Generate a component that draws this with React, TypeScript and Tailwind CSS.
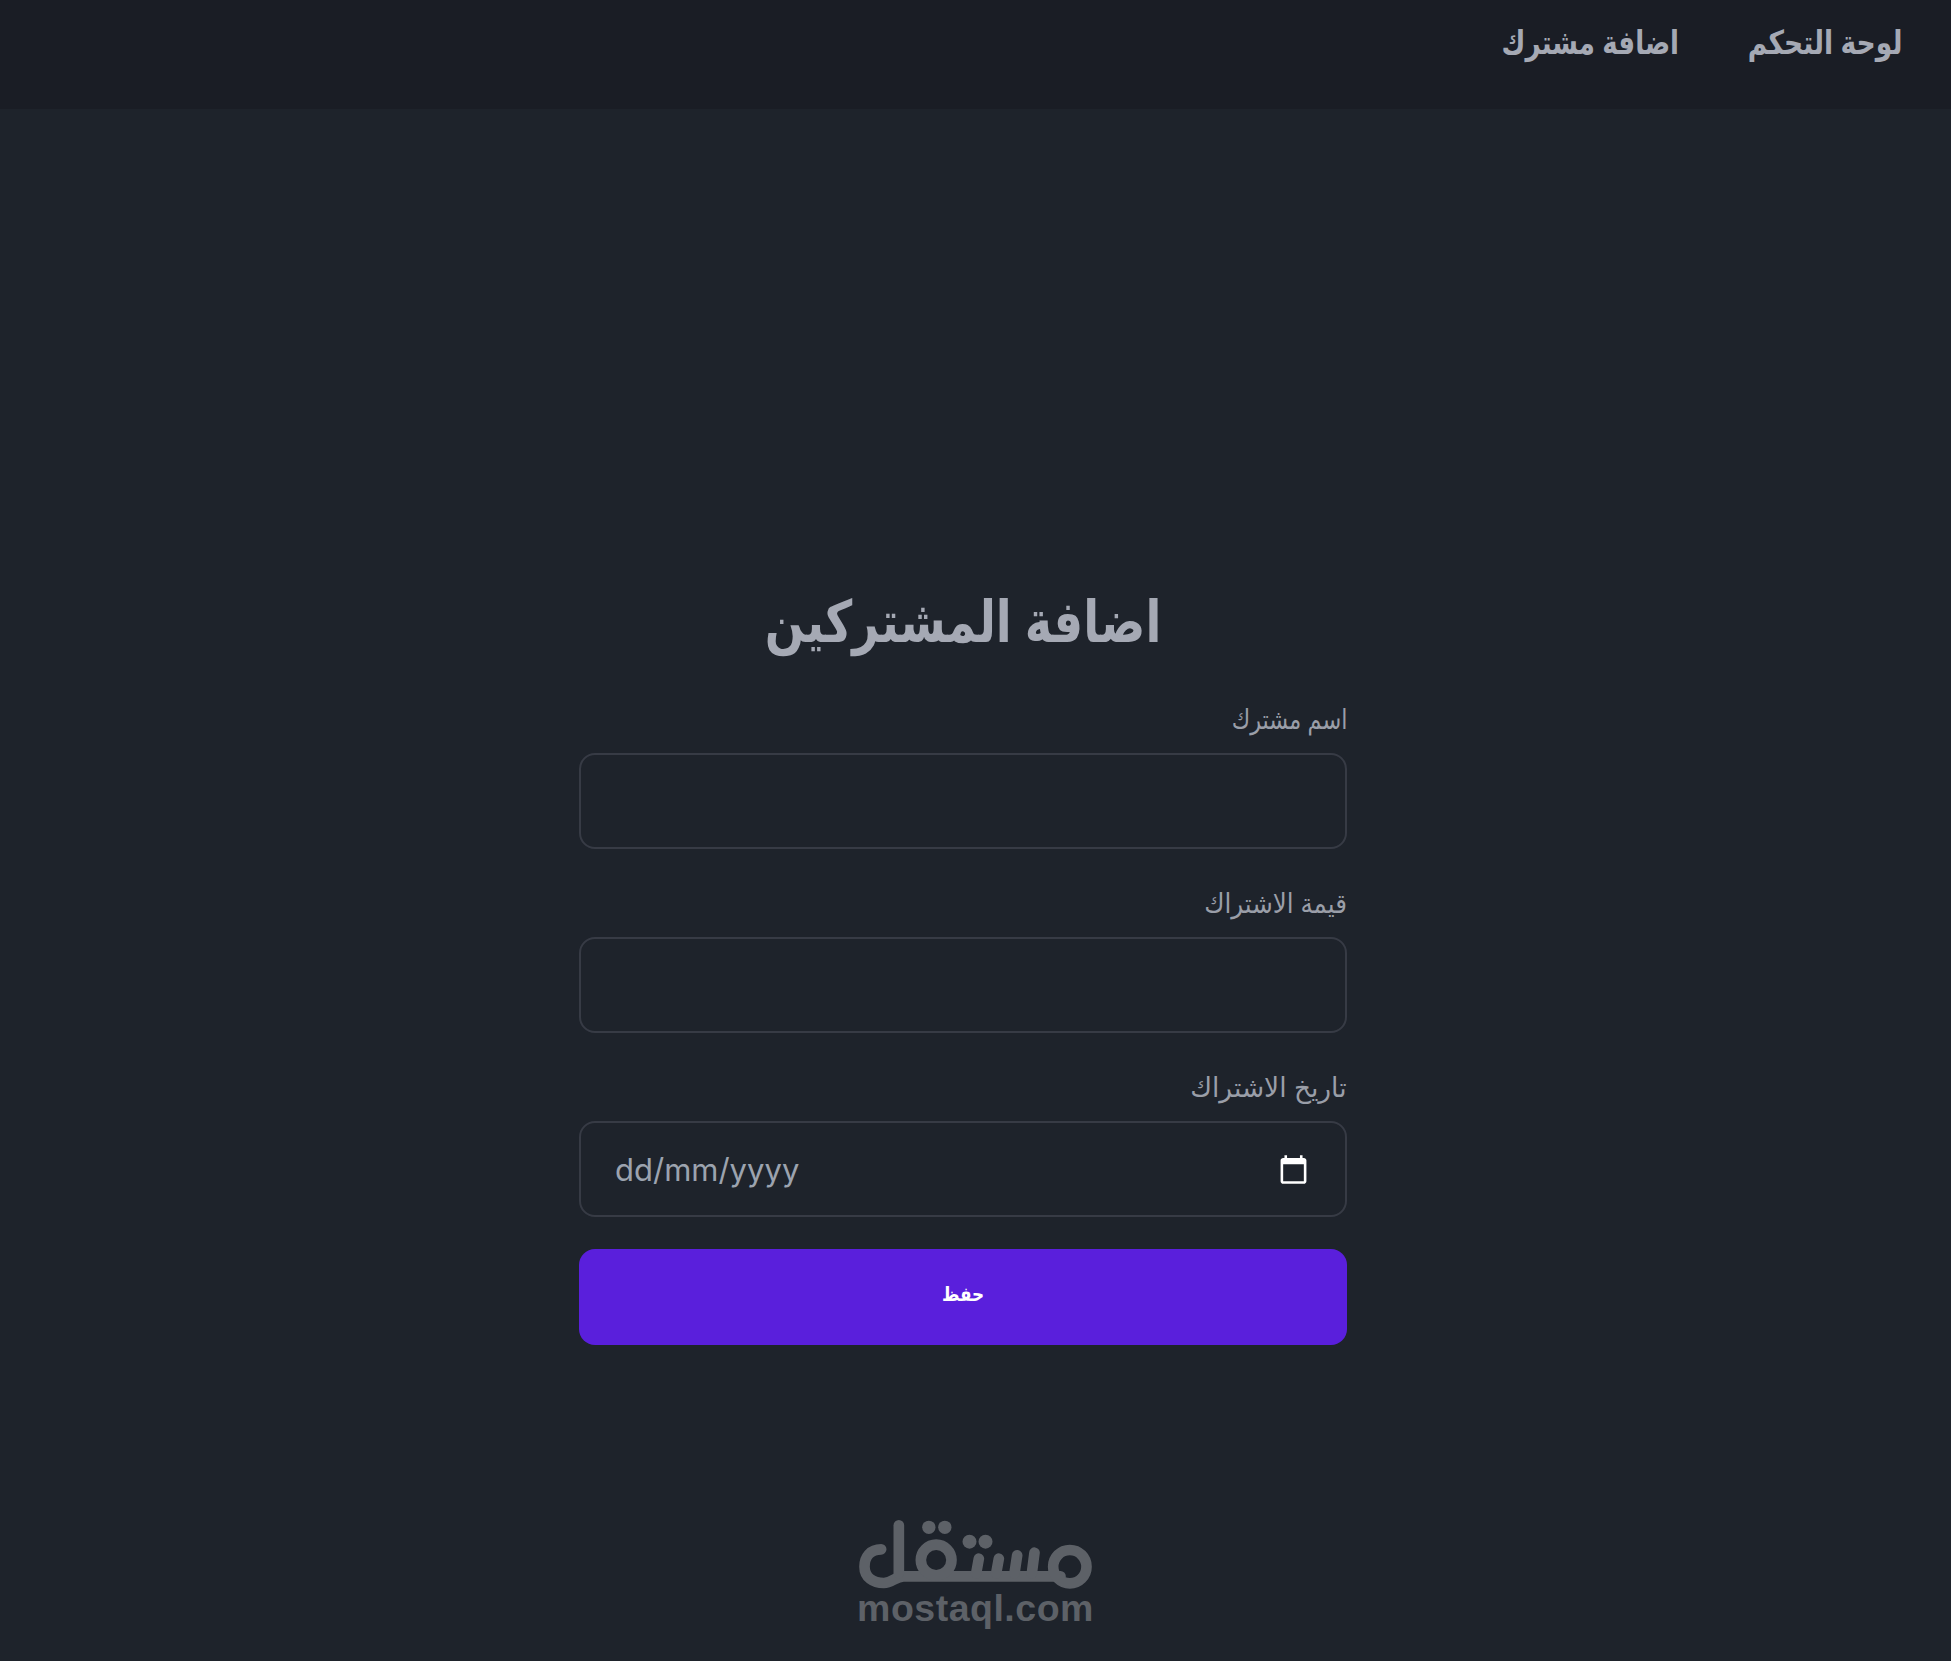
const arabic = { fontFamily: '"Liberation Sans", "DejaVu Sans", sans-serif' };

function Label({ text, scale }: { text: string; scale: string }) {
  return (
    <label className="mb-[14px] block text-[27px] leading-[38px] text-[#9a9ea8]">
      <span className={`inline-block origin-right ${scale}`}>{text}</span>
    </label>
  );
}

function Field({ label, scale }: { label: string; scale: string }) {
  return (
    <div className="flex flex-col">
      <Label text={label} scale={scale} />
      <input className="h-[96px] w-full rounded-[16px] border-2 border-[#373b45] bg-transparent px-[35px] text-[32px] text-white outline-none" />
    </div>
  );
}

function Logo() {
  return (
    <svg viewBox="0 0 900 300" className="h-[100px] w-[300px] -translate-x-[5.5px]" fill="none" stroke="#5d6167" strokeWidth="32" strokeLinecap="round" strokeLinejoin="round">
      <path d="M182 178 C150 178 132 200 132 230 C132 262 158 279 190 279 C215 279 225 259 250 259 H720" />
      <path d="M235 106 V250" />
      <circle cx="347" cy="210" r="46" />
      <path d="M467 250 L475 206 M527 250 L535 206 M582 250 L590 196 M634 250 L642 188" />
      <circle cx="748" cy="230" r="50" />
      <g fill="#5d6167" stroke="none">
        <circle cx="325" cy="112" r="20" />
        <circle cx="373" cy="112" r="20" />
        <circle cx="447" cy="155" r="21" />
        <circle cx="495" cy="155" r="21" />
      </g>
    </svg>
  );
}

export default function App() {
  return (
    <div dir="rtl" style={arabic} className="flex min-h-[1661px] flex-col bg-[#1e232b]">
      <header className="flex h-[109px] shrink-0 items-start gap-[26px] bg-[#1a1d25] pr-[30px] pt-[20px] text-[33px] font-bold leading-[46px] text-[#a5a9b4]">
        <a className="scale-x-[0.806]">لوحة التحكم</a>
        <a className="scale-x-[0.79]">اضافة مشترك</a>
      </header>
      <main className="flex flex-col items-center">
        <div className="flex w-full flex-col items-center pr-[25px]">
          <div className="mt-[477px] flex w-[768px] flex-col">
            <h1 className="mb-[43px] scale-x-[0.80] text-center text-[58px] font-bold leading-[72px] text-[#a5a9b4]">اضافة المشتركين</h1>
            <div className="flex flex-col gap-[36px]">
              <Field label="اسم مشترك" scale="scale-x-[0.83]" />
              <Field label="قيمة الاشتراك" scale="scale-x-[0.91]" />
              <div className="flex flex-col">
                <Label text="تاريخ الاشتراك" scale="scale-x-[0.98]" />
                <div dir="ltr" className="flex h-[96px] items-center justify-between rounded-[16px] border-2 border-[#373b45] pl-[34px] pr-[36px]">
                  <span style={{ fontFamily: 'Inter, sans-serif' }} className="pt-[2px] text-[31px] text-[#9ca3af]">dd/mm/yyyy</span>
                  <svg width="31" height="31" viewBox="0 0 24 24" fill="#ffffff"><path d="M20 3h-1V1h-2v2H7V1H5v2H4c-1.1 0-2 .9-2 2v16c0 1.1.9 2 2 2h16c1.1 0 2-.9 2-2V5c0-1.1-.9-2-2-2zm0 18H4V8h16v13z" /></svg>
                </div>
              </div>
            </div>
            <button className="mt-[32px] h-[96px] rounded-[16px] bg-[#5a1fdc] pb-[6px] text-[20px] font-bold text-white">
              <span className="inline-block scale-x-[0.84]">حفظ</span>
            </button>
          </div>
        </div>
        <div className="mt-[145px] flex w-[300px] flex-col items-center">
          <Logo />
          <span dir="ltr" className="-mt-[2px] text-[37.5px] font-bold leading-[40px] tracking-[0.5px] text-[#5d6167]">mostaql.com</span>
        </div>
      </main>
    </div>
  );
}
